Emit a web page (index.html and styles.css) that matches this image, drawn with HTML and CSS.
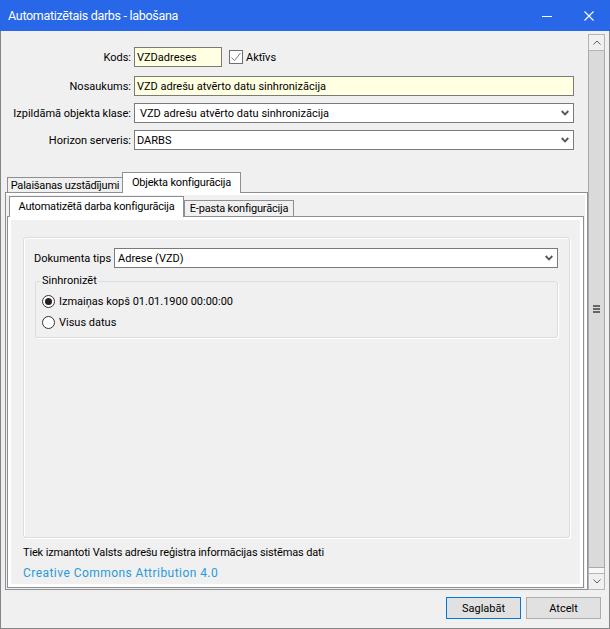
FILE: index.html
```html
<!DOCTYPE html>
<html lang="lv">
<head>
  <meta charset="UTF-8">
  <title>Automatizētais darbs - labošana</title>
  <link rel="stylesheet" href="styles.css">
</head>
<body>
  <div class="window">
    <header class="titlebar">
      <span class="title">Automatizētais darbs - labošana</span>
      <span class="cap-btn">
        <svg width="10" height="10" viewBox="0 0 10 10"><path d="M0 5.5 H10" stroke="#fff" stroke-width="1"/></svg>
      </span>
      <span class="cap-btn">
        <svg width="10" height="10" viewBox="0 0 10 10"><path d="M0.5 0.5 L9.5 9.5 M9.5 0.5 L0.5 9.5" stroke="#fff" stroke-width="1.1"/></svg>
      </span>
    </header>

    <div class="client">
      <div class="viewport">
        <div class="pane">
          <div class="form">
            <div class="row">
              <label class="lbl">Kods:</label>
              <div class="input yellow code">VZDadreses</div>
              <span class="check">
                <svg width="12" height="12" viewBox="0 0 12 12"><path d="M1.5 6.5 L4.5 9.5 L10.5 2" fill="none" stroke="#7d7d7d" stroke-width="1"/></svg>
              </span>
              <span class="check-lbl">Aktīvs</span>
            </div>
            <div class="row">
              <label class="lbl">Nosaukums:</label>
              <div class="input yellow">VZD adrešu atvērto datu sinhronizācija</div>
            </div>
            <div class="row">
              <label class="lbl">Izpildāmā objekta klase:</label>
              <div class="input select wide-pad">
                <span>VZD adrešu atvērto datu sinhronizācija</span>
                <svg class="chev" width="8" height="6" viewBox="0 0 8 6"><path d="M0.7 1 L4 4.4 L7.3 1" fill="none" stroke="#555" stroke-width="1.8"/></svg>
              </div>
            </div>
            <div class="row">
              <label class="lbl">Horizon serveris:</label>
              <div class="input select">
                <span>DARBS</span>
                <svg class="chev" width="8" height="6" viewBox="0 0 8 6"><path d="M0.7 1 L4 4.4 L7.3 1" fill="none" stroke="#555" stroke-width="1.8"/></svg>
              </div>
            </div>
          </div>

          <div class="tabs outer">
            <div class="strip">
              <div class="tab t-run">Palaišanas uzstādījumi</div>
              <div class="tab active t-obj">Objekta konfigurācija</div>
            </div>
            <div class="page">
              <div class="tabs inner">
                <div class="strip">
                  <div class="tab active t-job">Automatizētā darba konfigurācija</div>
                  <div class="tab t-mail">E-pasta konfigurācija</div>
                </div>
                <div class="page">
                  <div class="panel">
                    <div class="group">
                      <div class="doc-row">
                        <span class="doc-lbl">Dokumenta tips</span>
                        <div class="input select doc-select">
                          <span>Adrese (VZD)</span>
                          <svg class="chev" width="8" height="6" viewBox="0 0 8 6"><path d="M0.7 1 L4 4.4 L7.3 1" fill="none" stroke="#555" stroke-width="1.8"/></svg>
                        </div>
                      </div>
                      <fieldset class="sync">
                        <legend>Sinhronizēt</legend>
                        <div class="radio-row first">
                          <span class="radio checked"></span>
                          <span>Izmaiņas kopš 01.01.1900 00:00:00</span>
                        </div>
                        <div class="radio-row">
                          <span class="radio"></span>
                          <span>Visus datus</span>
                        </div>
                      </fieldset>
                    </div>
                    <p class="note">Tiek izmantoti Valsts adrešu reģistra informācijas sistēmas dati</p>
                    <a class="licence" href="#">Creative Commons Attribution 4.0</a>
                  </div>
                </div>
              </div>
            </div>
          </div>
        </div>

        <div class="vscroll">
          <div class="sb-btn">
            <svg width="8" height="5" viewBox="0 0 8 5"><path d="M0.5 4.5 L4 1 L7.5 4.5" fill="none" stroke="#606060" stroke-width="1"/></svg>
          </div>
          <div class="sb-thumb">
            <span class="grip"></span>
            <span class="grip"></span>
            <span class="grip"></span>
          </div>
          <div class="sb-track"></div>
          <div class="sb-btn">
            <svg width="8" height="5" viewBox="0 0 8 5"><path d="M0.5 0.5 L4 4 L7.5 0.5" fill="none" stroke="#606060" stroke-width="1"/></svg>
          </div>
        </div>
      </div>

      <div class="buttons">
        <button class="btn default">Saglabāt</button>
        <button class="btn">Atcelt</button>
      </div>
    </div>
  </div>
</body>
</html>
```

FILE: styles.css
```css
* {
  box-sizing: border-box;
}

body {
  margin: 0;
  font-family: 'Segoe UI', Roboto, 'Noto Sans', sans-serif;
  font-size: 11px;
  color: #000;
  background: #f0f0f0;
}

.window {
  width: 610px;
  height: 629px;
  border: 1px solid #858585;
  border-top: 0;
  background: #f0f0f0;
  display: flex;
  flex-direction: column;
}

/* title bar */

.titlebar {
  height: 31px;
  flex: none;
  margin: 0 -1px;
  padding-left: 8px;
  background: #2767e8;
  color: #fff;
  display: flex;
  align-items: center;
}

.title {
  flex: 1;
  font-size: 12.5px;
  letter-spacing: -0.3px;
  padding-bottom: 1px;
}

.cap-btn {
  width: 42px;
  height: 31px;
  display: flex;
  align-items: center;
  justify-content: center;
}

/* client */

.client {
  flex: 1;
  display: flex;
  flex-direction: column;
}

.viewport {
  height: 556px;
  margin: 3px 4px 0 4px;
  display: flex;
}

.pane {
  flex: 1;
  display: flex;
  flex-direction: column;
}

.form {
  padding-top: 13px;
}

.row {
  display: flex;
  align-items: center;
  height: 20px;
  margin-top: 7px;
}

.row:first-child {
  margin-top: 0;
}

.row:nth-child(2) {
  margin-top: 9px;
}

.lbl {
  width: 126px;
  margin-right: 3px;
  text-align: right;
  white-space: nowrap;
}

.input {
  width: 440px;
  height: 20px;
  padding: 0 2px;
  border: 1px solid #7a7a7a;
  background: #fff;
  display: flex;
  align-items: center;
  white-space: nowrap;
}

.input.yellow {
  background: #ffffe1;
}

.input.code {
  width: 88px;
}

.select {
  justify-content: space-between;
  padding-right: 4px;
}

.select.wide-pad {
  padding-left: 5px;
}

.check {
  width: 14px;
  height: 14px;
  margin-left: 7px;
  border: 1px solid #6f6f6f;
  background: #fff;
  display: flex;
  align-items: center;
  justify-content: center;
}

.check-lbl {
  margin-left: 3px;
}

/* tab controls */

.tabs {
  display: flex;
  flex-direction: column;
}

.tabs.outer {
  flex: 1;
  margin-top: 22px;
}

.tabs.inner {
  flex: 1;
  margin: 4px 3px 1px 1px;
}

.strip {
  display: flex;
  align-items: flex-end;
  padding-left: 2px;
}

.outer > .strip {
  height: 20px;
}

.inner > .strip {
  height: 19px;
}

.tab {
  height: 15px;
  border: 1px solid #8e8f94;
  border-bottom: 0;
  background: #f0f0f0;
  display: flex;
  align-items: center;
  justify-content: center;
  white-space: nowrap;
  line-height: 1;
  letter-spacing: -0.2px;
}

.tab.active {
  height: 21px;
  margin-bottom: -1px;
  background: #fff;
  position: relative;
  z-index: 1;
  padding-bottom: 1px;
}

.t-run { width: 116px; }
.t-obj { width: 119px; margin-left: -1px; }
.t-job { width: 175px; height: 20px; }
.t-mail { width: 110px; height: 16px; }

.page {
  flex: 1;
  display: flex;
  flex-direction: column;
  border: 1px solid #8e8f94;
  background: #f0f0f0;
  box-shadow: inset 0 2px 0 #fff, inset -2px 0 0 #fff;
}

.inner > .page {
  padding: 3px 3px 3px 3px;
  background: #fff;
  box-shadow: none;
}

.panel {
  flex: 1;
  background: #f0f0f0;
}

/* group boxes */

.group {
  height: 301px;
  margin: 17px 10px 0 12px;
  padding: 10px 11px 0 10px;
  border: 1px solid #d5dfe5;
  border-radius: 3px;
  box-shadow: inset 1px 1px 0 #fff, 1px 1px 0 #fff;
}

.doc-row {
  display: flex;
  align-items: center;
  height: 20px;
}

.doc-lbl {
  width: 80px;
  white-space: nowrap;
}

.doc-select {
  width: 444px;
  padding-left: 3px;
}

.sync {
  margin: 5px 0 0 1px;
  width: 523px;
  padding: 0 0 5px 5px;
  border: 1px solid #d5dfe5;
  border-radius: 3px;
  box-shadow: 1px 1px 0 #fff;
}

.sync legend {
  padding: 0 1px;
  line-height: 16px;
}

.radio-row {
  display: flex;
  align-items: center;
  height: 20px;
  margin-top: 1px;
}

.radio-row.first {
  margin-top: 2px;
}

.radio {
  width: 13px;
  height: 13px;
  margin: 0 4px 0 1px;
  border: 1px solid #333;
  border-radius: 50%;
  background: #fff;
  display: flex;
  align-items: center;
  justify-content: center;
}

.radio.checked::after {
  content: '';
  width: 7px;
  height: 7px;
  border-radius: 50%;
  background: #222;
}

.note {
  margin: 7px 0 0 12px;
  line-height: 16px;
  letter-spacing: -0.15px;
  white-space: nowrap;
}

.licence {
  display: block;
  margin: 4px 0 0 12px;
  line-height: 17px;
  font-size: 12px;
  letter-spacing: 0.45px;
  color: #2b9ad8;
  text-decoration: none;
}

/* scroll bar */

.vscroll {
  width: 17px;
  display: flex;
  flex-direction: column;
}

.sb-btn {
  height: 17px;
  border: 1px solid #b4b4b4;
  background: #f0f0f0;
  display: flex;
  align-items: center;
  justify-content: center;
}

.sb-thumb {
  height: 517px;
  border: 1px solid #a9a9a9;
  border-top: 0;
  background: #dadada;
  display: flex;
  flex-direction: column;
  align-items: center;
  justify-content: center;
  gap: 1px;
}

.grip {
  width: 7px;
  height: 2px;
  background: #666;
}

.sb-track {
  height: 5px;
  border-left: 1px solid #b4b4b4;
  border-right: 1px solid #b4b4b4;
  background: #f7f7f7;
}

/* bottom buttons */

.buttons {
  flex: 1;
  display: flex;
  justify-content: flex-end;
  gap: 5px;
  padding: 7px 8px 0 0;
}

.btn {
  width: 75px;
  height: 22px;
  padding: 0;
  border: 1px solid #adadad;
  background: #e1e1e1;
  font-family: inherit;
  font-size: 11px;
  color: #000;
}

.btn.default {
  border-color: #0078d7;
}
```
